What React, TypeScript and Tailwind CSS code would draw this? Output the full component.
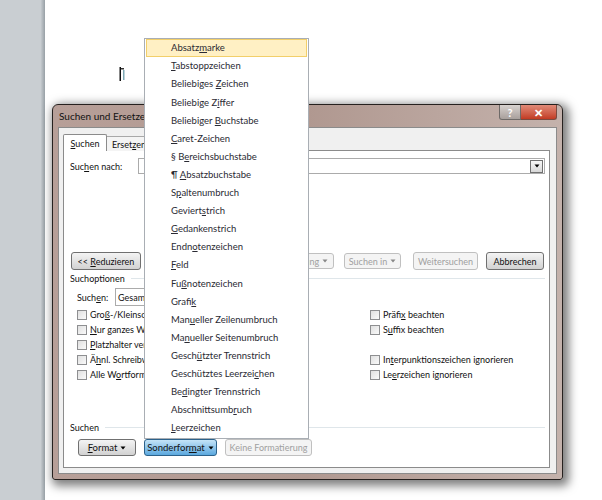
import type { ReactNode } from "react";

const menuItems: ReactNode[] = [
	<>Absatz<u>m</u>arke</>,
	<><u>T</u>abstoppzeichen</>,
	<>Beliebiges <u>Z</u>eichen</>,
	<>Beliebige Z<u>i</u>ffer</>,
	<>Beliebiger <u>B</u>uchstabe</>,
	<><u>C</u>aret-Zeichen</>,
	<>§ B<u>e</u>reichsbuchstabe</>,
	<>¶ <u>A</u>bsatzbuchstabe</>,
	<>S<u>p</u>altenumbruch</>,
	<>Geviert<u>s</u>trich</>,
	<><u>G</u>edankenstrich</>,
	<>Endn<u>o</u>tenzeichen</>,
	<><u>F</u>eld</>,
	<>Fu<u>ß</u>notenzeichen</>,
	<>Grafi<u>k</u></>,
	<>Man<u>u</u>eller Zeilenumbruch</>,
	<>Ma<u>n</u>ueller Seitenumbruch</>,
	<>Gesch<u>ü</u>tzter Trennstrich</>,
	<>Geschütztes Leerzei<u>c</u>hen</>,
	<>Be<u>d</u>ingter Trennstrich</>,
	<>Abschnittsumb<u>r</u>uch</>,
	<><u>L</u>eerzeichen</>,
];

// only what shows left of the open menu
const leftOptions: ReactNode[] = [
	<>Gro<u>ß</u>-/Kleinsch</>,
	<><u>N</u>ur ganzes W</>,
	<><u>P</u>latzhalter ver</>,
	<>Ä<u>h</u>nl. Schreibw</>,
	<>Alle W<u>o</u>rtforme</>,
];

function Caret({ className }: { className: string }) {
	return (
		<svg width="6" height="4" viewBox="0 0 6 4" className={className}>
			<path d="M0.5 0.5h5L3 3.5z" fill="currentColor" />
		</svg>
	);
}

function Check({ label }: { label: ReactNode }) {
	return (
		<div className="flex h-[15px] items-center whitespace-nowrap">
			<span className="mr-[3px] h-[10px] w-[10px] shrink-0 border border-[#8e8f91] bg-gradient-to-br from-[#e0e0e0] to-[#fafafa]" />
			<span>{label}</span>
		</div>
	);
}

function Button({
	children,
	className,
}: {
	children: ReactNode;
	className: string;
}) {
	return (
		<div
			className={`flex items-center justify-center gap-[3px] whitespace-nowrap rounded-[3px] border ${className}`}
		>
			{children}
		</div>
	);
}

const normalBtn =
	"border-[#707070] bg-gradient-to-b from-[#f4f4f4] to-[#d2d2d2] text-[#111]";
const disabledBtn = "border-[#c0c0c0] bg-[#f4f4f4] text-[#a0a0a0]";

function SectionTitle({ title }: { title: string }) {
	return (
		<div className="flex h-[12px] items-center">
			<span className="mr-[6px]">{title}</span>
			<div className="h-px flex-1 bg-[#dfe6ea]" />
		</div>
	);
}

export default function App() {
	return (
		<div
			className="relative flex h-[500px] w-[602px] overflow-hidden bg-white text-[9px] leading-none text-[#111]"
			style={{ fontFamily: 'Lato, "Noto Sans", sans-serif' }}
		>
			{/* word page background */}
			<div className="w-[45px] shrink-0 bg-gradient-to-r from-[#c9ced2] from-90% to-[#98a0a6]" />

			<div className="flex-1 pl-[7px] pt-[104px]">
				{/* dialog */}
				<div className="flex h-[376px] w-[511px] flex-col rounded-t-[6px] rounded-b-[3px] border border-[#26211f] bg-gradient-to-r from-[#b79f98] via-[#b09890] to-[#c4b2ac] shadow-[3px_3px_10px_3px_rgba(0,0,0,0.5)]">
					<div className="flex h-[22px] shrink-0 items-start justify-between pl-[6px] pr-[5px]">
						<span className="mt-[6px] text-[10px] text-[#111]">
							Suchen und Ersetzen
						</span>
						<div className="flex h-[15px]">
							<div className="flex w-[22px] items-center justify-center rounded-bl-[3px] border border-t-0 border-[#6e6a68] bg-gradient-to-b from-[#d8d2cf] to-[#a8a09c] text-[11px] font-bold text-white">
								?
							</div>
							<div className="flex w-[36px] items-center justify-center rounded-br-[3px] border border-l-0 border-t-0 border-[#7a4a40] bg-gradient-to-b from-[#e08a78] to-[#c23a22] text-[11px] font-bold text-white">
								✕
							</div>
						</div>
					</div>

					<div className="mx-[5px] mb-[5px] flex flex-1 flex-col border border-[#8b8b8b] bg-[#f0f0f0] pb-[5px] pl-[4px] pr-[6px] pt-[6px]">
						{/* tabs */}
						<div className="relative z-10 -mb-px flex h-[17px] shrink-0 items-end">
							<div className="flex h-[17px] w-[44px] items-center justify-center rounded-t-[2px] border border-b-0 border-[#8b8b8b] bg-white">
								<span><u>S</u>uchen</span>
							</div>
							<div className="flex h-[15px] w-[44px] items-center border-r border-t border-[#a8a8a8] bg-[#f4f4f4] pl-[5px]">
								<span>Erset<u>z</u>en</span>
							</div>
						</div>

						<div className="flex flex-1 flex-col border border-[#8b8b8b] bg-white pl-[6px] pr-[4px] pt-[7px]">
							<div className="flex h-[16px] items-center">
								<span className="w-[68px]">Suc<u>h</u>en nach:</span>
								<div className="flex h-full flex-1 items-center justify-end border border-[#ababab] pr-px">
									<div className="flex h-[13px] w-[13px] items-center justify-center border border-[#707070] bg-gradient-to-b from-[#f6f6f6] to-[#d8d8d8]">
										<Caret className="text-black" />
									</div>
								</div>
							</div>

							<div className="mt-[78px] flex h-[18px] items-center">
								<Button className={`ml-px h-[18px] w-[70px] ${normalBtn}`}>
									<span>{"<< "}<u>R</u>eduzieren</span>
								</Button>
								<Button
									className={`ml-[99px] h-[16px] w-[94px] ${disabledBtn}`}
								>
									Lesehervorhebung
									<Caret className="text-[#888]" />
								</Button>
								<Button className={`ml-[10px] h-[16px] w-[57px] ${disabledBtn}`}>
									Suchen in
									<Caret className="text-[#888]" />
								</Button>
								<Button className={`ml-[12px] h-[18px] w-[65px] ${disabledBtn}`}>
									Weitersuchen
								</Button>
								<Button className={`ml-[8px] h-[18px] w-[58px] ${normalBtn}`}>
									Abbrechen
								</Button>
							</div>

							<div className="mt-[2px]">
								<SectionTitle title="Suchoptionen" />
							</div>

							<div className="ml-[7px] mt-[4px] flex h-[18px] items-center">
								<span className="w-[38px]">Such<u>e</u>n:</span>
								<div className="flex h-full w-[60px] items-center border border-[#ababab] pl-[2px]">
									Gesamt
								</div>
							</div>

							<div className="mt-[1px] grid grid-cols-[293px_1fr] pl-[7px]">
								<div className="flex flex-col">
									{leftOptions.map((label, i) => (
										<Check key={i} label={label} />
									))}
								</div>
								<div className="flex flex-col">
									<Check label={<>Präfi<u>x</u> beachten</>} />
									<Check label={<>S<u>u</u>ffix beachten</>} />
									<div className="h-[15px]" />
									<Check
										label={<>In<u>t</u>erpunktionszeichen ignorieren</>}
									/>
									<Check label={<>Le<u>e</u>rzeichen ignorieren</>} />
								</div>
							</div>

							<div className="mt-[39px]">
								<SectionTitle title="Suchen" />
							</div>

							<div className="ml-[8px] mt-[6px] flex h-[17px] items-center text-[9.5px]">
								<Button className={`h-[17px] w-[58px] ${normalBtn}`}>
									<span><u>F</u>ormat</span>
									<Caret className="text-black" />
								</Button>
								<Button className="ml-[8px] h-[17px] w-[73px] border-[#2c628b] bg-gradient-to-b from-[#c4e4f8] to-[#5aa8de] text-[#111]">
									<span>Sonderfor<u>m</u>at</span>
									<Caret className="text-black" />
								</Button>
								<Button className={`ml-[8px] h-[17px] w-[87px] text-[9px] ${disabledBtn}`}>
									Keine Formatierung
								</Button>
							</div>
						</div>
					</div>
				</div>
			</div>

			{/* text cursor on the page */}
			<svg
				width="7"
				height="15"
				viewBox="0 0 7 15"
				className="absolute left-[119px] top-[67px]"
			>
				<rect x="0.5" y="0" width="1.5" height="14" fill="#111" />
				<rect x="2" y="1" width="3" height="1.5" fill="#333" />
				<rect x="4" y="3" width="1.5" height="10" fill="#7fa9b5" />
			</svg>

			{/* Sonderformat dropdown */}
			<div className="absolute left-[144px] top-[38px] z-20 flex h-[401px] w-[165px] flex-col border border-[#a9aeb4] bg-white px-px text-[9.5px] text-[#2a2a33]">
				{menuItems.map((item, i) => (
					<div
						key={i}
						className={
							i === 0
								? "flex h-[18.1px] shrink-0 items-center border border-[#f2cf6a] bg-[#fff0c4] pl-[24px]"
								: "flex h-[18.1px] shrink-0 items-center pl-[25px]"
						}
					>
						<span>{item}</span>
					</div>
				))}
			</div>
		</div>
	);
}
